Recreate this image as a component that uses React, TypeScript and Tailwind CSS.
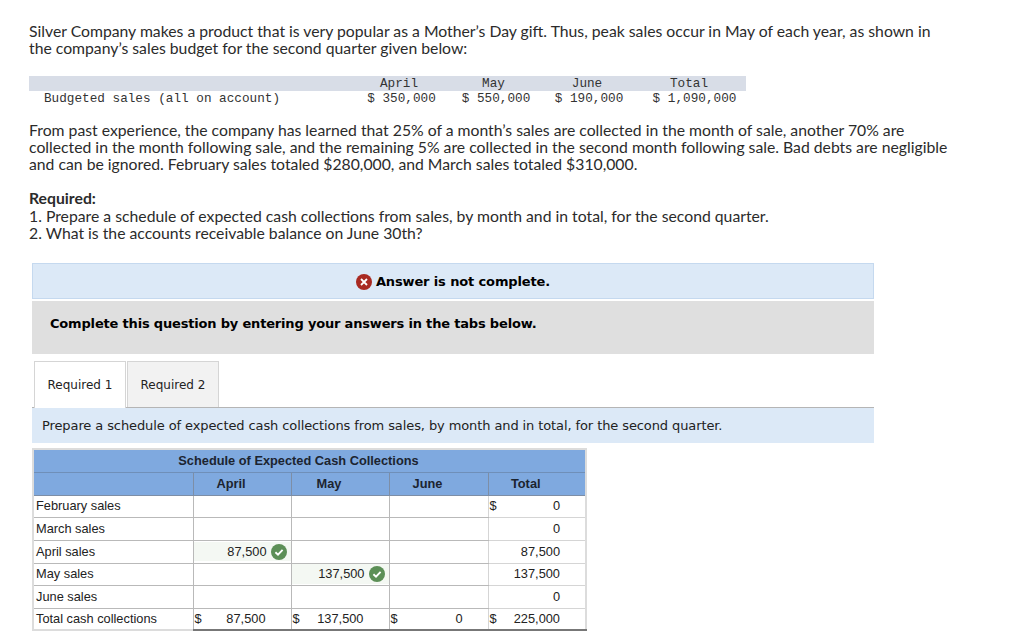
import React from 'react';

const rows = [
  { label: 'February sales', total: '0', dollar: true },
  { label: 'March sales', total: '0' },
  { label: 'April sales', april: '87,500', total: '87,500' },
  { label: 'May sales', may: '137,500', total: '137,500' },
  { label: 'June sales', total: '0' },
];

const rowHeights = ['h-[22px]', 'h-[23px]', 'h-[23px]', 'h-[22px]', 'h-[23px]'];

const CheckIcon = () => (
  <svg width="16" height="16" viewBox="0 0 16 16" className="shrink-0">
    <circle cx="8" cy="8" r="8" fill="#5c8f57" />
    <path d="M4.4 8.2 L7 10.6 L11.6 5.8" fill="none" stroke="#fff" strokeWidth="1.9" />
  </svg>
);

const CrossIcon = () => (
  <svg width="16" height="16" viewBox="0 0 16 16" className="shrink-0">
    <circle cx="8" cy="8" r="8" fill="#a92a22" />
    <path d="M5 5 L11 11 M11 5 L5 11" fill="none" stroke="#fff" strokeWidth="1.8" />
  </svg>
);

const Answer = ({ value }: { value: string }) => (
  <div className="h-full flex items-center justify-end bg-[#f4f8f3] pr-[4px] gap-[4px]">
    <span>{value}</span>
    <CheckIcon />
  </div>
);

const Money = ({ value, dollar }: { value: string; dollar?: boolean }) => (
  <div className="flex justify-between pl-[1px] pr-[25px]">
    <span>{dollar ? '$' : ''}</span>
    <span>{value}</span>
  </div>
);

export default function App() {
  return (
    <div className="w-[1024px] h-[639px] overflow-hidden bg-white text-[#222] pt-[22px] font-['Lato','Open_Sans',sans-serif]">
      <div className="pl-[29px] text-[15.75px] leading-[17px] text-[#2b2b2b]">
        <p>
          Silver Company makes a product that is very popular as a Mother’s Day gift. Thus, peak sales occur in May of
          each year, as shown in
          <br />
          the company’s sales budget for the second quarter given below:
        </p>
      </div>

      <table className="ml-[29px] mt-[20px] w-[717px] table-fixed border-collapse font-['Liberation_Mono',monospace] text-[12.7px] text-[#333]">
        <tbody>
          <tr className="bg-[#d8dde7] h-[15px] leading-[15px]">
            <td className="w-[326px]"></td>
            <td className="w-[94px] text-center pr-[6px]">April</td>
            <td className="w-[94px] text-center pr-[5px]">May</td>
            <td className="w-[94px] text-center pr-[6px]">June</td>
            <td className="text-center pr-[5px]">Total</td>
          </tr>
          <tr className="h-[15px] leading-[15px]">
            <td className="pl-[15px]">Budgeted sales (all on account)</td>
            <td className="text-center pr-[1px]">$ 350,000</td>
            <td className="text-center">$ 550,000</td>
            <td className="text-center pr-[2px]">$ 190,000</td>
            <td className="text-center pl-[6px]">$ 1,090,000</td>
          </tr>
        </tbody>
      </table>

      <div className="pl-[29px] mt-[15px] text-[15.75px] leading-[17px] text-[#2b2b2b]">
        <p>
          From past experience, the company has learned that 25% of a month’s sales are collected in the month of sale,
          another 70% are
          <br />
          collected in the month following sale, and the remaining 5% are collected in the second month following sale.
          Bad debts are negligible
          <br />
          and can be ignored. February sales totaled $280,000, and March sales totaled $310,000.
        </p>
        <p className="mt-[17px] font-bold">Required:</p>
        <p className="mt-[1px]">
          1. Prepare a schedule of expected cash collections from sales, by month and in total, for the second quarter.
        </p>
        <p>2. What is the accounts receivable balance on June 30th?</p>
      </div>

      <div className="ml-[32px] w-[842px] font-['DejaVu_Sans',sans-serif]">
        <div className="mt-[22px] h-[36px] pt-[1px] flex items-center justify-center gap-[4px] bg-[#dce9f7] border border-[#c5d9ef] text-[13px] tracking-[-0.13px] font-bold text-black">
          <CrossIcon />
          <span>Answer is not complete.</span>
        </div>
        <div className="mt-[2px] h-[53px] pb-[8px] flex items-center pl-[18px] bg-[#dfdfdf] text-[13px] tracking-[-0.18px] font-bold text-black">
          Complete this question by entering your answers in the tabs below.
        </div>

        <div className="mt-[7px] h-[47px] flex items-end gap-[1px] pl-[2px] border-b border-[#b5b5b5] text-[12px] text-[#222]">
          <div className="w-[92px] h-[47px] -mb-[1px] flex items-center justify-center bg-white border border-b-0 border-[#d5d5d5]">
            Required 1
          </div>
          <div className="w-[92px] h-[46px] flex items-center justify-center bg-[#f2f2f2] border border-b-0 border-[#d5d5d5]">
            Required 2
          </div>
        </div>
        <div className="h-[35px] flex items-center pl-[10px] bg-[#dce9f7] text-[13px] tracking-[-0.1px] text-[#222]">
          Prepare a schedule of expected cash collections from sales, by month and in total, for the second quarter.
        </div>
      </div>

      <table className="ml-[32px] mt-[5px] w-[555px] table-fixed border-collapse border-2 border-[#dcdcdc] font-['Liberation_Sans',sans-serif] text-[12.8px] text-[#222]">
        <colgroup>
          <col className="w-[160px]" />
          <col className="w-[98px]" />
          <col className="w-[98px]" />
          <col className="w-[99px]" />
          <col />
        </colgroup>
        <thead className="bg-[#7fa9df] font-bold text-[#1c2430]">
          <tr className="h-[23px]">
            <th colSpan={5} className="border-b border-[#6f8fb8] text-center font-bold pr-[22px] pl-0">
              Schedule of Expected Cash Collections
            </th>
          </tr>
          <tr className="h-[23px]">
            <th className="border-b border-[#7d8ea6]"></th>
            <th className="border-b border-l border-[#7d8ea6] font-bold pr-[22px]">April</th>
            <th className="border-b border-l border-[#7d8ea6] font-bold pr-[22px]">May</th>
            <th className="border-b border-l border-[#7d8ea6] font-bold pr-[22px]">June</th>
            <th className="border-b border-l border-[#7d8ea6] font-bold pr-[22px]">Total</th>
          </tr>
        </thead>
        <tbody>
          {rows.map((row, i) => (
            <tr key={row.label} className={rowHeights[i]}>
              <td className="border-b border-[#b9b9b9] pl-[2px]">{row.label}</td>
              <td className="p-0 border-b border-l border-[#b9b9b9] text-right">
                {row.april && <Answer value={row.april} />}
              </td>
              <td className="p-0 border-b border-l border-[#b9b9b9] text-right">
                {row.may && <Answer value={row.may} />}
              </td>
              <td className="p-0 border-b border-l border-[#b9b9b9]"></td>
              <td className="p-0 border-b border-l border-[#d5d5d5]">
                <Money value={row.total} dollar={row.dollar} />
              </td>
            </tr>
          ))}
          <tr className="h-[22px]">
            <td className="pl-[2px]">Total cash collections</td>
            <td className="p-0 border-t border-b-2 border-l border-t-[#222] border-b-[#777] border-l-[#b9b9b9]">
              <Money value="87,500" dollar />
            </td>
            <td className="p-0 border-t border-b-2 border-l border-t-[#222] border-b-[#777] border-l-[#b9b9b9]">
              <Money value="137,500" dollar />
            </td>
            <td className="p-0 border-t border-b-2 border-l border-t-[#222] border-b-[#777] border-l-[#b9b9b9]">
              <Money value="0" dollar />
            </td>
            <td className="p-0 border-t border-b-2 border-l border-t-[#222] border-b-[#777] border-l-[#d5d5d5]">
              <Money value="225,000" dollar />
            </td>
          </tr>
        </tbody>
      </table>
    </div>
  );
}
